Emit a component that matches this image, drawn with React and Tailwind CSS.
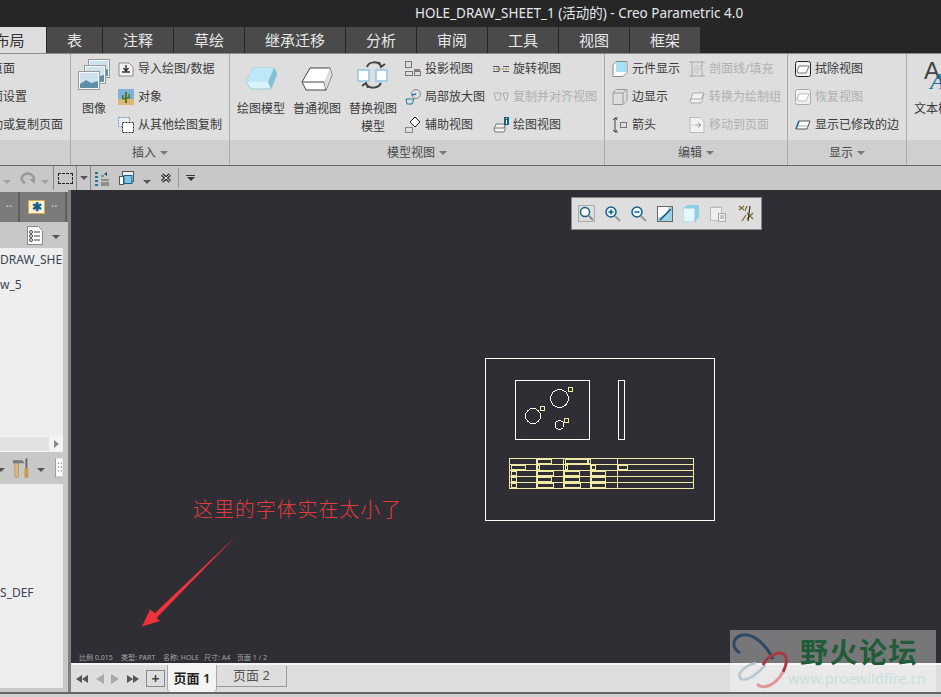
import React from "react";

const cjk = "font-['Noto_Sans','Noto_Sans_CJK_SC',sans-serif]";

function Svg({ children, w = 16, h = 16, className = "" }) {
  return (
    <svg width={w} height={h} viewBox={`0 0 ${w} ${h}`} className={`shrink-0 ${className}`}>
      {children}
    </svg>
  );
}

function Caret({ className = "border-t-[#555]" }) {
  return <span className={`inline-block w-0 h-0 border-x-[4px] border-x-transparent border-t-[4px] ${className}`}></span>;
}

/* ribbon icons */
const ImportIcon = () => (
  <Svg>
    <path d="M1 2h10l4 4v9H1z" fill="#f4f4f4" stroke="#8a8a8a" />
    <path d="M8 4v5M5.5 7 8 10l2.5-3M4 11h8" fill="none" stroke="#333" strokeWidth="1.4" />
  </Svg>
);
const ObjectIcon = () => (
  <Svg>
    <rect width="16" height="16" fill="#7fb0d8" />
    <rect y="10" width="16" height="6" fill="#d9b878" />
    <path d="M7 3h2v11H7zM4 6h1.5v3H7v1.5H4zM12 5h-1.5v3H9v1.5h3z" fill="#4d7a22" />
  </Svg>
);
const CopySheetIcon = () => (
  <Svg>
    <rect x="0.5" y="0.5" width="11" height="9" fill="#eee" stroke="#6b9bb8" strokeDasharray="2 1" />
    <rect x="4.5" y="5.5" width="11" height="10" fill="#fff" stroke="#222" strokeDasharray="2 1" />
  </Svg>
);
const ImageStack = () => (
  <Svg w={32} h={32}>
    {[[10, 0], [6, 6], [0, 12]].map(([x, y], i) => (
      <g key={i}>
        <rect x={x + 0.5} y={y + 0.5} width="21" height="18" fill="#f7f7f7" stroke="#9a9a9a" />
        <rect x={x + 2} y={y + 2} width="18" height="15" fill="#cfe3ef" />
        <path d={`M${x + 2} ${y + 13}l6-4 5 3 7-2v7H${x + 2}z`} fill="#5d8fa8" />
      </g>
    ))}
  </Svg>
);
const BlueCube = () => (
  <Svg w={32} h={24}>
    <path d="M8 1h21l3 6-6 15H6L1 15z" fill="#d9f3fc" stroke="#9cc" />
    <path d="M8 1h21l3 6-6 8H1z" fill="#bfe8f6" />
    <path d="M23 15l3 7 6-15-3-6z" fill="#82bfd6" />
  </Svg>
);
const WhiteCube = () => (
  <Svg w={32} h={24}>
    <path d="M9 1h20l2 7-6 15H5L1 15z" fill="#fff" stroke="#444" />
    <path d="M1 15h22l2 8M23 15l8-7" fill="none" stroke="#444" />
    <path d="M23 15 29 1l2 7-6 15z" fill="#ddd" />
  </Svg>
);
const SwapIcon = () => (
  <Svg w={32} h={32}>
    <path d="M10 8c2-6 11-6 14-1M22 3l2 5 4-3M24 24c-3 6-12 6-15 1M11 29l-2-5-4 3" fill="none" stroke="#444" strokeWidth="2" />
    <rect x="1" y="11" width="11" height="11" fill="#fff" stroke="#8cc8e0" strokeWidth="1.5" />
    <rect x="19" y="11" width="11" height="11" fill="#fff" stroke="#8cc8e0" strokeWidth="1.5" />
  </Svg>
);
const ProjectIcon = () => (
  <Svg>
    <g fill="none" stroke="#777">
      <rect x="0.5" y="0.5" width="6" height="6" />
      <rect x="0.5" y="10.5" width="7" height="4" />
      <rect x="9.5" y="10.5" width="6" height="4" />
    </g>
    <path d="M9 9h6" stroke="#222" />
  </Svg>
);
const DetailIcon = () => (
  <Svg>
    <circle cx="11" cy="5" r="4.5" fill="none" stroke="#888" />
    <path d="M1 10h8l-2 5H2z" fill="none" stroke="#1a7aa0" />
    <path d="M7 6l4-1" stroke="#1a7aa0" strokeWidth="1.5" />
  </Svg>
);
const AuxIcon = () => (
  <Svg>
    <rect x="0.5" y="10.5" width="7" height="5" fill="none" stroke="#888" />
    <path d="M10 0l5 5-5 5-5-5z" fill="#fff" stroke="#222" />
  </Svg>
);
const RotateIcon = () => (
  <Svg h={8}>
    <path d="M0 1.5h6v5H0M10 1.5h6M10 6.5h6" fill="none" stroke="#555" />
    <path d="M0 4h16" stroke="#a5782a" strokeDasharray="2 1" />
  </Svg>
);
const CopyAlignIcon = () => (
  <Svg h={10}>
    <path d="M1 1h7l-1 7H3zM10 1h5l-1 7h-2z" fill="none" stroke="#aaa" />
  </Svg>
);
const InfoIcon = () => (
  <Svg>
    <path d="M1 12l2-5h9v6l-1 2H2z" fill="#f3f3f3" stroke="#777" />
    <path d="M2 11h9l1-4" fill="none" stroke="#777" />
    <rect x="11" width="5" height="8" fill="#14618a" />
    <rect x="13" y="1" width="1" height="1" fill="#fff" />
    <rect x="13" y="3" width="1" height="4" fill="#fff" />
  </Svg>
);
const ComponentIcon = () => (
  <Svg>
    <path d="M4 .5h11v11l-4 4H1V4z" fill="#fff" stroke="#8a8a8a" />
    <rect x="4" y="1" width="10" height="10" fill="#a8e0f5" />
  </Svg>
);
const EdgeIcon = () => (
  <Svg>
    <path d="M4 .5h11v11l-4 4H1V4zM1 4h10v11M11 4l4-3.5" fill="none" stroke="#999" />
  </Svg>
);
const ArrowIcon = () => (
  <Svg>
    <path d="M3 1v14M1 3l2-2 2 2M1 13l2 2 2-2M3 1h3M3 15h3" fill="none" stroke="#444" />
    <rect x="8.5" y="5.5" width="6" height="5" fill="none" stroke="#777" />
  </Svg>
);
const HatchIcon = () => (
  <Svg>
    <path d="M0 1h16M0 15h16M3 0v16M13 0v16" stroke="#aaa" fill="none" />
    <path d="M4 12l8-8M4 9l5-5M7 12l5-5" stroke="#bbb" />
  </Svg>
);
const ConvertIcon = () => (
  <Svg>
    <path d="M1 12l3-8h11l-2 8-1 2H2z" fill="#f2f2f2" stroke="#aaa" />
    <path d="M2 10h10l3-6" fill="none" stroke="#aaa" />
  </Svg>
);
const MoveIcon = () => (
  <Svg>
    <path d="M1 .5h10l4 4v11H1z" fill="#f2f2f2" stroke="#bbb" />
    <path d="M3 8h1M6 8h5M9 5.5 12 8l-3 2.5" fill="none" stroke="#999" />
  </Svg>
);
const EraseIcon = ({ disabled }) => {
  const c = disabled ? "#aaa" : "#222";
  return (
    <Svg>
      <rect x="0.5" y="0.5" width="15" height="15" rx="2" fill="#f2f2f2" stroke={c} />
      <path d="M2 10l2-5h10l-2 5-1 2H3z" fill="#fff" stroke={disabled ? "#bbb" : "#777"} />
    </Svg>
  );
};
const ModEdgeIcon = () => (
  <Svg h={12}>
    <path d="M1 10l3-8h11l-3 8H2z" fill="#fff" stroke="#555" />
    <path d="M1 10l3-8" stroke="#11719c" strokeWidth="1.5" />
    <path d="M3 7h10" stroke="#aaa" />
  </Svg>
);
const TextStyleIcon = () => (
  <svg width="30" height="32" viewBox="0 0 30 32" className="shrink-0 ml-[10px]">
    <text x="0" y="20" fontSize="24" fill="#444" fontFamily="Liberation Sans, sans-serif">A</text>
    <text x="6" y="30" fontSize="24" fontStyle="italic" fill="#14739c" fontFamily="Liberation Serif, serif">A</text>
  </svg>
);

function SmallItem({ icon, label, disabled }) {
  return (
    <div className="h-7 flex items-center gap-[4px] whitespace-nowrap">
      <span className="w-4 h-4 flex items-center justify-center shrink-0">{icon}</span>
      <span className={disabled ? "text-[#b0b0b0]" : "text-[#3a3a3a]"}>{label}</span>
    </div>
  );
}

function BigButton({ icon, children, w = "w-14" }) {
  return (
    <div className={`${w} flex flex-col items-center`}>
      <div className="h-[45px] pb-[9px] flex items-end justify-center">{icon}</div>
      <div className="text-center text-[#3a3a3a] leading-[18px] whitespace-nowrap">{children}</div>
    </div>
  );
}

function Group({ width, label, children, className = "" }) {
  return (
    <div className={`${width} flex flex-col border-r border-[#aaaaaa] overflow-hidden`}>
      <div className={`h-[86px] pt-px flex ${className}`}>{children}</div>
      <div className="h-[25px] bg-[#cfcfcf] flex items-center justify-center gap-[4px] text-[#4a4a4a]">
        {label}
        {label && <Caret className="border-t-[#777]" />}
      </div>
    </div>
  );
}

function Ribbon() {
  return (
    <div className="flex border-t border-[#8a8a8a] border-b-[#666] border-b bg-[#dedede] text-[12px]">
      <Group width="w-[71px]">
        <div className="flex flex-col text-[#3a3a3a] whitespace-nowrap">
          <div className="h-7 flex items-center ml-[-9px]">页面</div>
          <div className="h-7 flex items-center ml-[-21px]">页面设置</div>
          <div className="h-7 flex items-center ml-[-9px]">动或复制页面</div>
        </div>
      </Group>
      <Group width="w-[159px]" label="插入" className="pl-[7px]">
        <BigButton w="w-8" icon={<ImageStack />}>图像</BigButton>
        <div className="ml-2">
          <SmallItem icon={<ImportIcon />} label="导入绘图/数据" />
          <SmallItem icon={<ObjectIcon />} label="对象" />
          <SmallItem icon={<CopySheetIcon />} label="从其他绘图复制" />
        </div>
      </Group>
      <Group width="w-[375px]" label="模型视图" className="pl-[3px]">
        <BigButton icon={<BlueCube />}>绘图模型</BigButton>
        <BigButton icon={<WhiteCube />}>普通视图</BigButton>
        <BigButton icon={<SwapIcon />}>替换视图<br />模型</BigButton>
        <div className="ml-1 w-[88px]">
          <SmallItem icon={<ProjectIcon />} label="投影视图" />
          <SmallItem icon={<DetailIcon />} label="局部放大图" />
          <SmallItem icon={<AuxIcon />} label="辅助视图" />
        </div>
        <div>
          <SmallItem icon={<RotateIcon />} label="旋转视图" />
          <SmallItem icon={<CopyAlignIcon />} label="复制并对齐视图" disabled />
          <SmallItem icon={<InfoIcon />} label="绘图视图" />
        </div>
      </Group>
      <Group width="w-[183px]" label="编辑" className="pl-[7px]">
        <div className="w-[77px]">
          <SmallItem icon={<ComponentIcon />} label="元件显示" />
          <SmallItem icon={<EdgeIcon />} label="边显示" />
          <SmallItem icon={<ArrowIcon />} label="箭头" />
        </div>
        <div>
          <SmallItem icon={<HatchIcon />} label="剖面线/填充" disabled />
          <SmallItem icon={<ConvertIcon />} label="转换为绘制组" disabled />
          <SmallItem icon={<MoveIcon />} label="移动到页面" disabled />
        </div>
      </Group>
      <Group width="w-[119px]" label="显示" className="pl-[7px]">
        <div>
          <SmallItem icon={<EraseIcon />} label="拭除视图" />
          <SmallItem icon={<EraseIcon disabled />} label="恢复视图" disabled />
          <SmallItem icon={<ModEdgeIcon />} label="显示已修改的边" />
        </div>
      </Group>
      <div className="flex-1 flex flex-col overflow-hidden">
        <div className="h-[86px] pt-px pl-[7px] flex flex-col">
          <div className="h-[45px] pb-[9px] flex items-end"><TextStyleIcon /></div>
          <div className="text-[#3a3a3a] leading-[18px] whitespace-nowrap">文本样式</div>
        </div>
        <div className="h-[25px] bg-[#cfcfcf]"></div>
      </div>
    </div>
  );
}

function QuickBar() {
  return (
    <div className="h-6 bg-[#c8c8c8] flex items-center">
      <span className="ml-[3px] opacity-40"><Caret className="border-t-[#666]" /></span>
      <svg width="16" height="12" viewBox="0 0 16 12" className="ml-[8px]">
        <path d="M14 9A6 5 0 1 0 6 11" fill="none" stroke="#9a9a9a" strokeWidth="2.5" />
        <path d="M10 7l6 0 0 5z" fill="#9a9a9a" />
      </svg>
      <span className="ml-[6px] opacity-60"><Caret className="border-t-[#888]" /></span>
      <div className="ml-[4px] h-6 flex border-x border-[#888]">
        <div className="w-[23px] flex items-center justify-center border-r border-[#888]">
          <span className="w-[15px] h-[11px] border border-dashed border-[#222]"></span>
        </div>
        <div className="w-[13px] flex items-center justify-center"><Caret /></div>
      </div>
      <svg width="15" height="15" viewBox="0 0 15 15" className="ml-[4px]">
        <path d="M6 12h8M6 14h8M6 9h8M6 5h3" stroke="#555" />
        <path d="M0 2h3M0 6h3M0 10h3M0 14h3" stroke="#1a7aa0" strokeWidth="2" />
        <path d="M9 3l3-2v4zM14 2l-2 4" fill="#14507a" />
      </svg>
      <svg width="16" height="15" viewBox="0 0 16 15" className="ml-[9px]">
        <rect x="3.5" y="0.5" width="11" height="10" fill="#eee" stroke="#555" />
        <rect x="0.5" y="5.5" width="4" height="8" fill="#fff" stroke="#555" />
        <rect x="5" y="4.5" width="8" height="8" fill="#7fc4de" stroke="#14618a" />
      </svg>
      <span className="ml-[8px]"><Caret /></span>
      <svg width="12" height="10" viewBox="0 0 12 10" className="ml-[9px]">
        <path d="M2 1.5l8 7M10 1.5l-8 7" stroke="#222" strokeWidth="3" />
        <path d="M2 1.5l8 7M10 1.5l-8 7" stroke="#fff" strokeWidth="1" />
      </svg>
      <span className="ml-[6px] w-px h-5 bg-[#9a9a9a]"></span>
      <div className="ml-[7px] flex flex-col items-center gap-px">
        <span className="w-[9px] h-px bg-[#333]"></span>
        <Caret className="border-t-[#333]" />
      </div>
    </div>
  );
}

function LeftPanel() {
  return (
    <div className="w-[71px] flex flex-col border-r-[3px] border-[#808080] bg-[#c8c8c8] text-[12px] text-[#3a4458]">
      <div className="mt-[2px] h-[30px] bg-[#7b7b7b] flex items-center">
        <div className="w-5 h-full border-r-2 border-[#5f5f5f] text-[#cfcfcf] flex items-center justify-center leading-none">··</div>
        <div className="w-[47px] h-full border-r-2 border-[#5f5f5f] flex items-center pl-[8px] gap-[6px]">
          <span className="w-[17px] h-[14px] bg-[#fbf3d8] border border-[#d8a84c] flex items-center justify-center">
            <span className="text-[#14618a] text-[12px] font-bold leading-none">✱</span>
          </span>
          <span className="text-[#cfcfcf] leading-none">··</span>
        </div>
      </div>
      <div className="h-[26px] flex items-center pl-[27px]">
        <svg width="16" height="19" viewBox="0 0 16 19">
          <path d="M.5.5h11l4 4v14H.5z" fill="#fafafa" stroke="#8a8a8a" />
          <path d="M7 6h6M7 10h6M7 14h6" stroke="#444" />
          <circle cx="4" cy="6" r="1.5" fill="none" stroke="#444" />
          <circle cx="4" cy="10" r="1.5" fill="none" stroke="#444" />
          <circle cx="4" cy="14" r="1.5" fill="none" stroke="#444" />
        </svg>
        <span className="ml-[9px]"><Caret /></span>
      </div>
      <div className="flex-1 flex flex-col pr-[5px] pb-[4px]">
        <div className="h-[188px] bg-[#eeeeee] overflow-hidden whitespace-nowrap leading-[18px] pt-[3px]">
          <div>DRAW_SHEET_1</div>
          <div className="mt-[7px]">w_5</div>
        </div>
        <div className="h-[16px] bg-[#e2e2e2] border-y border-[#f4f4f4] flex justify-end">
          <div className="w-[14px] bg-[#f4f4f4] flex items-center justify-center">
            <span className="w-0 h-0 border-y-[4px] border-y-transparent border-l-[5px] border-l-[#888]"></span>
          </div>
        </div>
        <div className="h-8 flex items-center">
          <span className="ml-[-3px]"><Caret /></span>
          <svg width="18" height="22" viewBox="0 0 18 22" className="ml-[7px]">
            <path d="M1 3h10l2 3H1z" fill="#77777d" />
            <rect x="3" y="6" width="4" height="15" fill="#d8b878" stroke="#9c7c3c" strokeWidth=".5" />
            <path d="M15 1v10" stroke="#6a6a72" strokeWidth="2" />
            <rect x="13" y="11" width="4" height="10" fill="#c89a4a" />
          </svg>
          <span className="ml-[8px]"><Caret /></span>
          <svg width="8" height="20" viewBox="0 0 8 20" className="ml-[10px]">
            <rect width="8" height="20" fill="#fafafa" />
            <path d="M.5 0v20M0 19.5h8" stroke="#999" />
            <path d="M3 5h1M6 5h1M3 9h1M6 9h1M3 13h1M6 13h1" stroke="#444" />
          </svg>
        </div>
        <div className="flex-1 bg-[#eeeeee] overflow-hidden whitespace-nowrap leading-[18px] pt-[100px]">
          S_DEF
        </div>
      </div>
    </div>
  );
}

const headBoxes = [
  [57.5, 14], [85, 23], [107, 3], [31, 14.5, 6], [57.5, 2, 6], [85, 2, 6], [111.5, 4, 6], [138.5, 9, 6],
];
const rowBoxes = [
  [[31, 5], [57.5, 16], [84.5, 14.5], [111.5, 14]],
  [[31, 5], [57.5, 14], [84.5, 14.5], [111.5, 14]],
  [[31, 5], [57.5, 16], [84.5, 16], [111.5, 14]],
];

function Drawing() {
  const yellow = "#f1eaa6";
  return (
    <svg width="240" height="180" viewBox="0 0 240 180" shapeRendering="crispEdges" className="absolute left-[409px] top-[160px]" fill="none">
      <rect x="5.5" y="8.5" width="229" height="162" stroke="#fff" />
      <rect x="35.5" y="30.5" width="74" height="59" stroke="#fff" />
      <rect x="138.5" y="30.5" width="6" height="59" stroke="#fff" />
      <circle cx="79.5" cy="48.5" r="9" stroke="#fff" />
      <circle cx="53" cy="66" r="7.5" stroke="#fff" />
      <circle cx="79.5" cy="75" r="4.3" stroke="#fff" />
      <g stroke={yellow}>
        <rect x="88.5" y="37.5" width="4" height="4" />
        <rect x="60.5" y="56.5" width="4" height="4" />
        <rect x="84.5" y="68.5" width="4" height="4" />
        <rect x="29.5" y="108.5" width="184" height="30" />
        {[114.5, 120.5, 126.5, 132.5].map((y) => (
          <path key={y} d={`M29.5 ${y}h184`} />
        ))}
        {[56.5, 83.5, 110.5, 137.5].map((x) => (
          <path key={x} d={`M${x} 108.5v30`} />
        ))}
        {headBoxes.map(([x, w, row], i) => (
          <rect key={i} x={x} y={row ? 115.5 : 109.5} width={w} height="4" />
        ))}
        {rowBoxes.map((boxes, r) =>
          boxes.map(([x, w]) => (
            <rect key={`${r}-${x}`} x={x} y={121.5 + r * 6} width={w} height="4" />
          ))
        )}
      </g>
    </svg>
  );
}

function FloatingBar() {
  return (
    <div className="absolute left-[500px] top-[7px] w-[191px] h-[33px] bg-[#dedede] border border-[#888] flex items-center pl-[6px] gap-[9px]">
      <svg width="17" height="17" viewBox="0 0 17 17">
        <rect x="0.5" y="0.5" width="16" height="16" fill="none" stroke="#aaa" />
        <circle cx="7" cy="7" r="4.5" fill="#fff" stroke="#14618a" strokeWidth="1.5" />
        <path d="M10 10l5 5" stroke="#888" strokeWidth="2" />
      </svg>
      <svg width="17" height="17" viewBox="0 0 17 17">
        <circle cx="7" cy="7" r="5" fill="#eaf8fc" stroke="#14618a" strokeWidth="1.5" />
        <path d="M4.5 7h5M7 4.5v5" stroke="#14618a" strokeWidth="1.5" />
        <path d="M11 11l5 5" stroke="#999" strokeWidth="2" />
      </svg>
      <svg width="17" height="17" viewBox="0 0 17 17">
        <circle cx="7" cy="7" r="5" fill="#eaf8fc" stroke="#14618a" strokeWidth="1.5" />
        <path d="M4.5 7h5" stroke="#14618a" strokeWidth="1.5" />
        <path d="M11 11l5 5" stroke="#999" strokeWidth="2" />
      </svg>
      <svg width="16" height="16" viewBox="0 0 16 16" className="ml-px">
        <rect width="16" height="16" fill="#9fd3e4" />
        <path d="M0 0h12a14 14 0 0 1-12 12z" fill="#fff" />
        <path d="M3 14 14 3" stroke="#14506e" strokeWidth="1.5" />
        <rect x="0.5" y="0.5" width="15" height="15" fill="none" stroke="#666" />
      </svg>
      <svg width="18" height="17" viewBox="0 0 18 17" className="ml-px">
        <path d="M4 0h12v12l-4 5H0V4z" fill="#8fcde2" />
        <rect y="3" width="12" height="14" fill="#e4f7fd" stroke="#8fcde2" />
      </svg>
      <svg width="18" height="17" viewBox="0 0 18 17">
        <path d="M3 1h9v3H3z" fill="#ccc" />
        <rect x="0.5" y="2.5" width="11" height="13" fill="#eee" stroke="#bbb" />
        <rect x="8.5" y="8.5" width="7" height="8" fill="#eee" stroke="#aaa" />
        <path d="M10 11h4M10 13h4" stroke="#999" />
      </svg>
      <svg width="18" height="17" viewBox="0 0 18 17" className="ml-px">
        <path d="M1 1l5 4M6 1 1 5M9 1 7 6M4 16l4-6M9 8l6 6M15 8l-6 6" stroke="#7d6a2a" strokeWidth="1.2" />
        <path d="M12 1l-2 15" stroke="#333" strokeWidth="1.2" />
      </svg>
    </div>
  );
}

function SheetBar() {
  return (
    <div className="h-[29px] border-t-2 border-[#f4f4f4] bg-[#dedede] flex items-center pl-[5px] text-[14px] text-[#3a3a3a]">
      <svg width="12" height="8" viewBox="0 0 12 8"><path d="M6 0v8L0 4zM12 0v8L6 4z" fill="#555" /></svg>
      <svg width="8" height="10" viewBox="0 0 8 10" className="ml-[8px]"><path d="M8 0v10L0 5z" fill="#a8a8a8" /></svg>
      <svg width="8" height="10" viewBox="0 0 8 10" className="ml-[7px]"><path d="M0 0v10l8-5z" fill="#a8a8a8" /></svg>
      <svg width="12" height="8" viewBox="0 0 12 8" className="ml-[8px]"><path d="M0 0v8l6-4zM6 0v8l6-4z" fill="#555" /></svg>
      <div className="ml-[7px] w-[19px] h-[17px] border border-[#888] flex items-center justify-center text-[14px] font-bold leading-none text-[#444]">+</div>
      <div className="ml-[2px] w-[50px] h-[27px] bg-[#f4f4f4] border-x border-[#aaa] rounded-b-sm flex items-center justify-center font-semibold whitespace-nowrap text-[13px] text-[#222]">页面 1</div>
      <div className="w-[70px] h-[21px] mb-[5px] border-r border-b border-[#999] flex items-center justify-center whitespace-nowrap text-[13px] text-[#555]">页面 2</div>
    </div>
  );
}

function Watermark() {
  return (
    <div className="absolute left-[730px] top-[630px] w-[206px] h-[62px] bg-white/35 overflow-hidden">
      <div className="relative h-full">
        <svg width="66" height="62" viewBox="0 0 66 62" className="absolute left-0 top-0" fill="none">
          <path d="M10 23C2 18 1 8 12 5c12-2 24 10 31 24" stroke="#2e4a64" strokeWidth="3" />
          <path d="M26 33C14 36 6 44 11 49c6 3 18-6 24-14" stroke="#b9c6d0" strokeWidth="2.5" />
          <path d="M53 42c6-12 4-22-8-18-6 2-10 7-12 11" stroke="#a83a44" strokeWidth="3" />
          <path d="M27 54c6 6 18 2 26-12" stroke="#e09a9e" strokeWidth="3" />
        </svg>
        <div className="absolute left-[70px] top-[5px] text-[#215c38] text-[28px] leading-[34px] font-bold tracking-[1.5px] whitespace-nowrap">野火论坛</div>
        <div className="absolute left-[58px] top-[39px] text-[#c6dfdf] text-[14px] leading-5 tracking-[.2px] whitespace-nowrap">www.proewildfire.cn</div>
      </div>
    </div>
  );
}

export default function App() {
  return (
    <div className={`relative w-[941px] h-[697px] overflow-hidden bg-[#d0d0d0] ${cjk}`}>
      <div className="h-[27px] bg-[#262626] pl-[415px] flex items-center text-[13.5px] text-[#e4e8ec] whitespace-nowrap">
        HOLE_DRAW_SHEET_1 (活动的) - Creo Parametric 4.0
      </div>
      <div className="h-[26px] bg-[#262626] flex gap-px text-[15px] text-[#e8e8e8] overflow-hidden">
        <div className="w-[73px] ml-[-27px] shrink-0 bg-[#dedede] text-[#333] flex items-center justify-center">布局</div>
        {[
          ["表", "w-[55px]"],
          ["注释", "w-[70px]"],
          ["草绘", "w-[70px]"],
          ["继承迁移", "w-[100px]"],
          ["分析", "w-[70px]"],
          ["审阅", "w-[70px]"],
          ["工具", "w-[70px]"],
          ["视图", "w-[70px]"],
          ["框架", "w-[70px]"],
        ].map(([label, w]) => (
          <div key={label} className={`${w} shrink-0 bg-[#4a4a4a] flex items-center justify-center`}>{label}</div>
        ))}
      </div>
      <Ribbon />
      <QuickBar />
      <div className="h-[502px] flex">
        <LeftPanel />
        <div className="flex-1 flex flex-col">
          <div className="relative flex-1 bg-[#2f2e34] overflow-hidden">
            <FloatingBar />
            <Drawing />
            <div className="absolute left-[122px] top-[308px] text-[20px] leading-6 tracking-[.9px] font-light text-[#e23b3f] whitespace-nowrap">这里的字体实在太小了</div>
            <svg width="110" height="100" viewBox="0 0 110 100" className="absolute left-[65px] top-[343px]">
              <path d="M100 3 19 80l-5-3.5-8 17 18-5.500-3.500-3z" fill="#f0323a" />
            </svg>
            <div className="absolute left-[8px] top-[463px] flex text-[7px] leading-[9px] text-[#a8a8a8] whitespace-nowrap">
              <span className="w-[42px]">比例 0.015</span>
              <span className="w-[42px]">类型: PART</span>
              <span className="w-[41px]">名称: HOLE</span>
              <span className="w-[33px]">尺寸: A4</span>
              <span>页面 1 / 2</span>
            </div>
          </div>
          <SheetBar />
        </div>
      </div>
      <div className="h-[2px] bg-[#666]"></div>
      <Watermark />
    </div>
  );
}
